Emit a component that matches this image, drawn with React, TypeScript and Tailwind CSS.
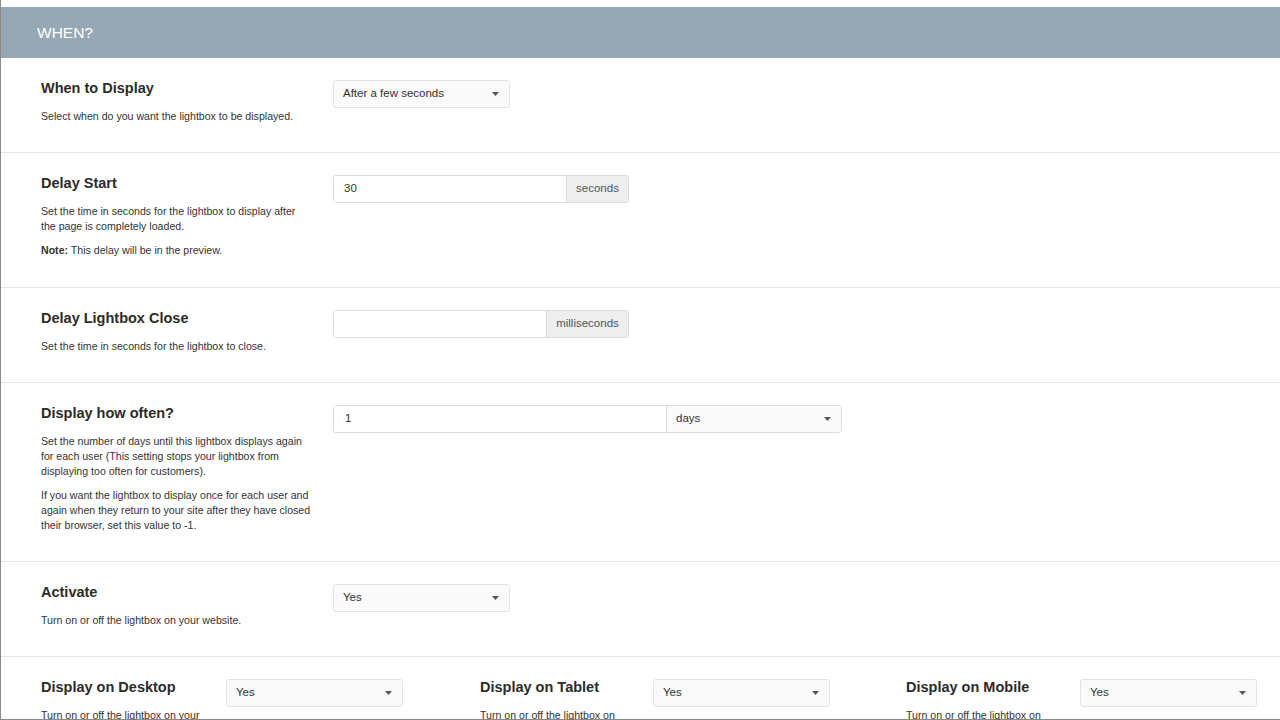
import React from 'react';

// ── Small form pieces ──────────────────────────────────────────────────────

function Caret() {
  return (
    <svg width="7" height="4" viewBox="0 0 7 4" className="shrink-0">
      <path d="M0 0h7L3.5 4z" fill="#555" />
    </svg>
  );
}

function Select({ value, className = '' }: { value: string; className?: string }) {
  return (
    <div className={`flex h-[28px] items-center justify-between rounded-[3px] border border-[#e3e3e3] bg-[#fafafa] pl-[9px] pr-[10px] text-[11.5px] text-[#333] ${className}`}>
      <span>{value}</span>
      <Caret />
    </div>
  );
}

function AddonInput({ value, addon, inputW }: { value: string; addon: string; inputW: string }) {
  return (
    <div className="flex h-[28px] w-[296px] rounded-[3px] border border-[#dcdcdc] text-[11.5px] text-[#333]">
      <div className={`flex items-center bg-white pl-[10px] ${inputW}`}>{value}</div>
      <div className="flex flex-1 items-center justify-center border-l border-[#dcdcdc] bg-[#eeeeee] text-[#555]">{addon}</div>
    </div>
  );
}

function Row({ title, children, control, h }: { title: string; children: React.ReactNode; control: React.ReactNode; h: string }) {
  return (
    <section className={`flex shrink-0 border-b border-[#e6e6e6] pl-[40px] ${h}`}>
      <div className="w-[271px] pt-[21px]">
        <h3 className="text-[14.5px] font-bold leading-[19px] text-[#2b2b2b]">{title}</h3>
        <div className="mt-[11px] space-y-[9px] text-[10.6px] leading-[15px] text-[#333]">{children}</div>
      </div>
      <div className="ml-[21px] pt-[22px]">{control}</div>
    </section>
  );
}

function DeviceCol({ title, labelW, colW, descW }: { title: string; labelW: string; colW: string; descW: string }) {
  return (
    <div className={`flex ${colW}`}>
      <div className={`${labelW} pt-[21px]`}>
        <h3 className="text-[14.5px] font-bold leading-[19px] text-[#2b2b2b]">{title}</h3>
        <p className={`mt-[11px] text-[10.6px] leading-[15px] text-[#333] ${descW}`}>Turn on or off the lightbox on your website.</p>
      </div>
      <div className="pt-[22px]">
        <Select value="Yes" className="w-[177px]" />
      </div>
    </div>
  );
}

// ── Page ───────────────────────────────────────────────────────────────────

export default function App() {
  return (
    <div className="h-[720px] w-[1280px] overflow-hidden bg-white" style={{ fontFamily: '"Liberation Sans", Arial, sans-serif' }}>
      <div className="flex h-[720px] flex-col border-b border-l border-[#8a8a8a] pt-[7px]">
        <header className="flex h-[51px] shrink-0 items-center bg-[#97a8b5] pl-[36px] text-[15.5px] text-white">WHEN?</header>

        <Row title="When to Display" h="h-[95px]" control={<Select value="After a few seconds" className="w-[177px]" />}>
          <p>Select when do you want the lightbox to be displayed.</p>
        </Row>

        <Row title="Delay Start" h="h-[135px]" control={<AddonInput value="30" addon="seconds" inputW="w-[232px]" />}>
          <p>Set the time in seconds for the lightbox to display after the page is completely loaded.</p>
          <p><b>Note:</b> This delay will be in the preview.</p>
        </Row>

        <Row title="Delay Lightbox Close" h="h-[95px]" control={<AddonInput value="" addon="milliseconds" inputW="w-[212px]" />}>
          <p>Set the time in seconds for the lightbox to close.</p>
        </Row>

        <Row
          title="Display how often?"
          h="h-[179px]"
          control={
            <div className="flex h-[28px] w-[509px] rounded-[3px] border border-[#dcdcdc] text-[11.5px] text-[#333]">
              <div className="flex w-[332px] items-center bg-white pl-[11px]">1</div>
              <div className="flex flex-1 items-center justify-between border-l border-[#dcdcdc] bg-[#fafafa] pl-[9px] pr-[10px]">
                <span>days</span>
                <Caret />
              </div>
            </div>
          }
        >
          <p>Set the number of days until this lightbox displays again for each user (This setting stops your lightbox from displaying too often for customers).</p>
          <p>If you want the lightbox to display once for each user and again when they return to your site after they have closed their browser, set this value to -1.</p>
        </Row>

        <Row title="Activate" h="h-[95px]" control={<Select value="Yes" className="w-[177px]" />}>
          <p>Turn on or off the lightbox on your website.</p>
        </Row>

        <section className="flex flex-1 pl-[40px]">
          <DeviceCol title="Display on Desktop" labelW="w-[185px]" colW="w-[439px]" descW="w-[165px]" />
          <DeviceCol title="Display on Tablet" labelW="w-[173px]" colW="w-[426px]" descW="w-[148px]" />
          <DeviceCol title="Display on Mobile" labelW="w-[174px]" colW="w-[360px]" descW="w-[148px]" />
        </section>
      </div>
    </div>
  );
}
